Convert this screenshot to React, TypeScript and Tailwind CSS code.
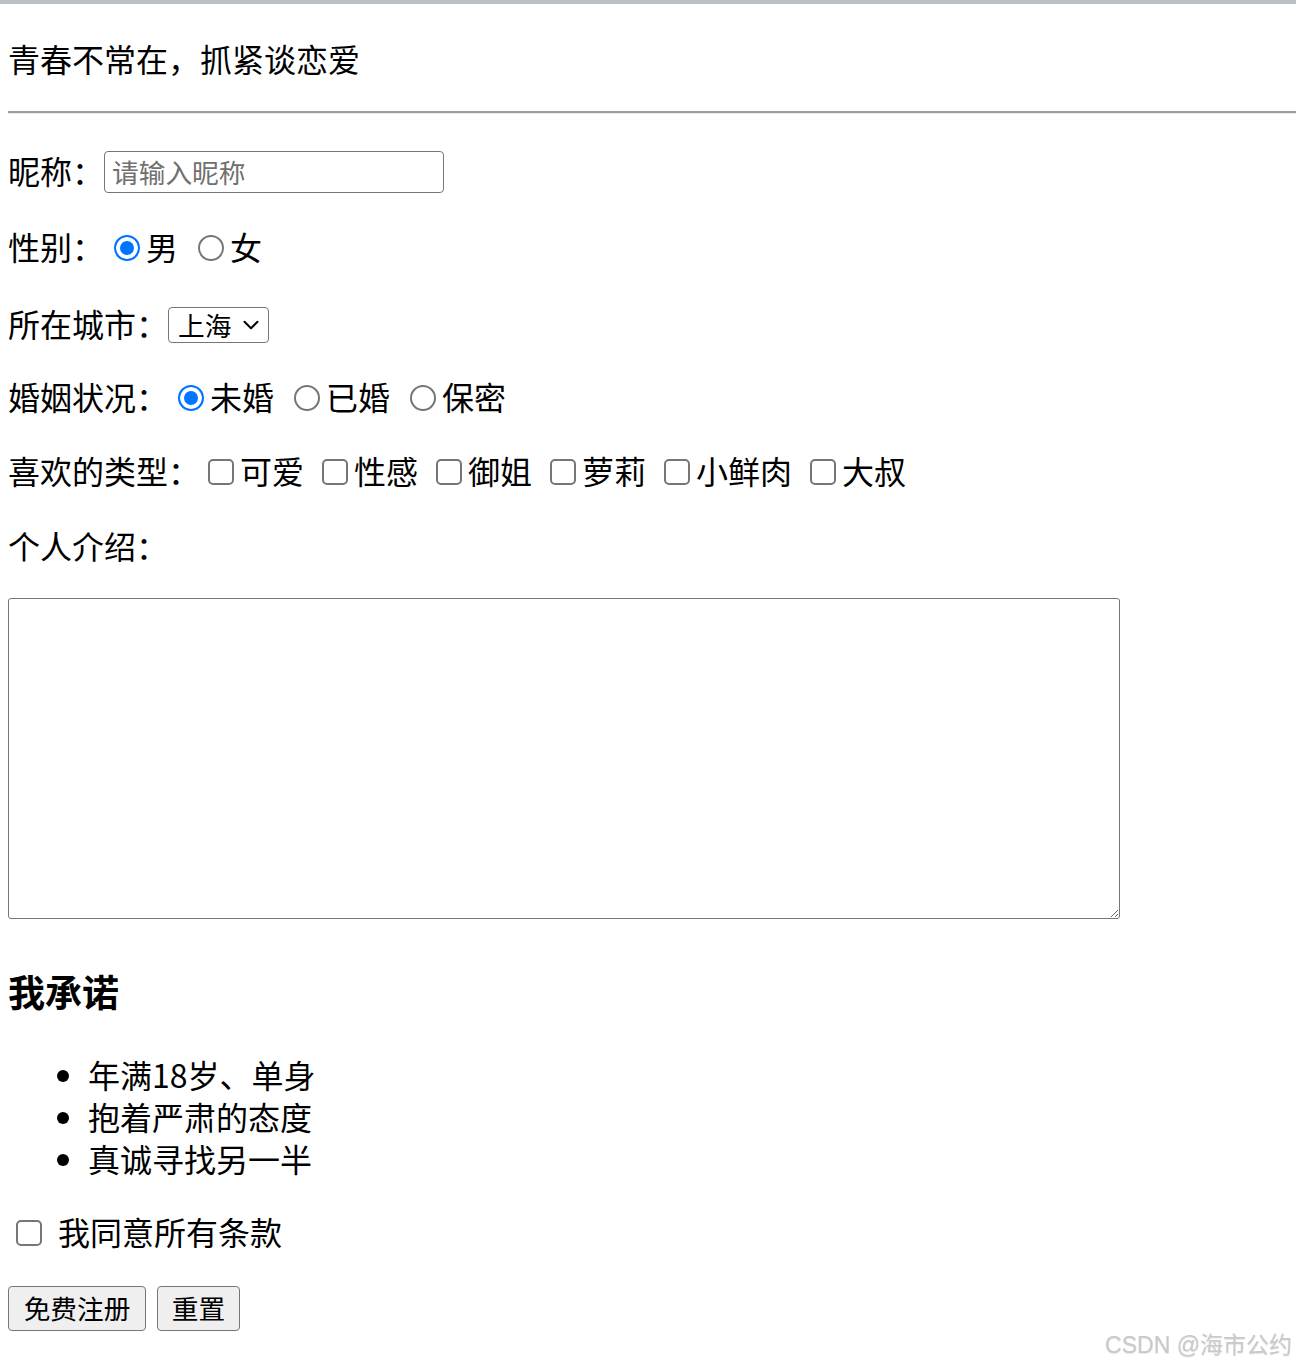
import { ChevronDown } from "lucide-react";

const font = { fontFamily: '"Noto Sans CJK SC", "Noto Sans", sans-serif' };

const radioCls =
  "ml-[10px] mr-[6px] mt-[4px] h-[26px] w-[26px] shrink-0 appearance-none rounded-full border-2 border-[#767676] bg-white checked:border-[#0075ff] checked:bg-[#0075ff] checked:shadow-[inset_0_0_0_4px_white]";
const checkCls =
  "mt-[4px] h-[26px] w-[26px] shrink-0 appearance-none rounded-[5px] border-2 border-[#767676] bg-white";

function Radio({ checked, label, first }: { checked?: boolean; label: string; first?: boolean }) {
  return (
    <label className={`flex items-center ${first ? "" : "ml-[10px]"}`}>
      <input type="radio" name="r" defaultChecked={checked} className={radioCls} />
      <span>{label}</span>
    </label>
  );
}

function Check({ label, first }: { label: string; first?: boolean }) {
  return (
    <label className={`flex items-center ${first ? "" : "ml-[10px]"}`}>
      <input type="checkbox" className={`ml-[8px] mr-[6px] ${checkCls}`} />
      <span>{label}</span>
    </label>
  );
}

function App() {
  return (
    <div className="relative min-h-[1367px] bg-white text-black text-[32px] leading-[42px]" style={font}>
      <div className="h-[4px] bg-[#bcc0c7]" />
      <div className="flex flex-col pl-[8px]">
        <h1 className="mt-[33px] h-[42px]">青春不常在，抓紧谈恋爱</h1>
        <hr className="mt-[32px] border-t-2 border-b border-t-[#9c9c9c] border-b-[#ececec]" />

        <div className="mt-[35px] flex h-[42px] items-center">
          <span>昵称：</span>
          <input
            type="text"
            placeholder="请输入昵称"
            className="mt-[4px] h-[42px] w-[340px] shrink-0 rounded-[4px] border border-[#767676] px-[7px] text-[26.7px] placeholder:text-[#707070]"
          />
        </div>

        <div className="mt-[34px] flex h-[42px] items-center">
          <span>性别：</span>
          <label className="flex items-center">
            <input type="radio" name="sex" defaultChecked className={radioCls} />
            <span>男</span>
          </label>
          <label className="ml-[10px] flex items-center">
            <input type="radio" name="sex" className={radioCls} />
            <span>女</span>
          </label>
        </div>

        <div className="mt-[35px] flex h-[42px] items-center">
          <span>所在城市：</span>
          <div className="relative mt-[4px] flex h-[36px] w-[101px] items-center rounded-[4px] border border-[#767676] pl-[9px] text-[26.7px] leading-[34px]">
            <span>上海</span>
            <ChevronDown className="absolute right-[4px] top-[4px] h-[26px] w-[26px]" strokeWidth={1.8} />
          </div>
        </div>

        <div className="mt-[31px] flex h-[42px] items-center">
          <span>婚姻状况：</span>
          <Radio checked label="未婚" first />
          <Radio label="已婚" />
          <Radio label="保密" />
        </div>

        <div className="mt-[32px] flex h-[42px] items-center">
          <span>喜欢的类型：</span>
          <Check label="可爱" first />
          <Check label="性感" />
          <Check label="御姐" />
          <Check label="萝莉" />
          <Check label="小鲜肉" />
          <Check label="大叔" />
        </div>

        <div className="mt-[33px] h-[42px]">个人介绍：</div>

        <textarea className="mt-[32px] h-[321px] w-[1112px] rounded-[3px] border border-[#767676]" />

        <h3 className="mt-[51px] h-[42px] text-[37px] font-bold">我承诺</h3>

        <ul className="mt-[41px] list-disc pl-[80px]">
          <li>年满18岁、单身</li>
          <li>抱着严肃的态度</li>
          <li>真诚寻找另一半</li>
        </ul>

        <div className="mt-[31px] flex h-[42px] items-center">
          <input type="checkbox" className={`ml-[8px] mr-[16px] ${checkCls}`} />
          <span>我同意所有条款</span>
        </div>

        <div className="mt-[34px] flex items-center gap-[11px]">
          <button className="h-[45px] w-[138px] rounded-[4px] border border-[#767676] bg-[#efefef] pb-[3px] text-[26.7px]">
            免费注册
          </button>
          <button className="h-[45px] w-[83px] rounded-[4px] border border-[#767676] bg-[#efefef] pb-[3px] text-[26.7px]">
            重置
          </button>
        </div>
      </div>

      <div
        className="absolute bottom-[8px] right-[4px] text-[23px] leading-[28px] text-[#c9c9c9] [text-shadow:0_1px_1px_#e6e6e6]"
        style={{ fontFamily: '"Liberation Sans", "Noto Sans CJK SC", sans-serif' }}
      >
        CSDN @海市公约
      </div>
    </div>
  );
}

export default App;
